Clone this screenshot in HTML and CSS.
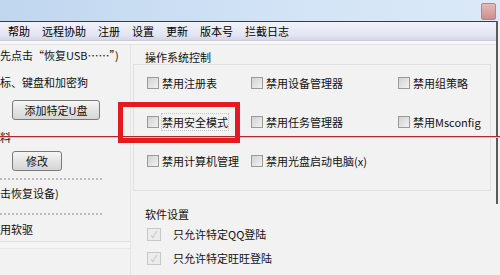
FILE: index.html
```html
<!DOCTYPE html>
<html lang="zh-CN">
<head>
    <meta charset="UTF-8">
    <title>操作系统控制</title>
    <link rel="stylesheet" href="styles.css">
</head>
<body>

    <!-- Title bar -->
    <div class="titlebar">
        <div class="close-btn"></div>
    </div>

    <div class="main">
        <div class="app">
            <!-- Menu -->
            <div class="menubar">
                <span>帮助</span>
                <span>远程协助</span>
                <span>注册</span>
                <span>设置</span>
                <span>更新</span>
                <span>版本号</span>
                <span>拦截日志</span>
            </div>
            <div class="menu-strip"></div>

            <div class="content">
                <!-- Left panel, cut off at the window edge -->
                <div class="left">
                    <div class="ltext">先点击“恢复USB……”)</div>
                    <div class="ltext t2">标、键盘和加密狗</div>
                    <div class="btn btn-add">添加特定U盘</div>
                    <div class="ltext t3">料</div>
                    <div class="btn btn-edit">修改</div>
                    <div class="dashed d1"></div>
                    <div class="ltext t4">击恢复设备)</div>
                    <div class="dashed d2"></div>
                    <div class="ltext t5">用软驱</div>
                    <div class="left-bottom"></div>
                </div>

                <!-- Right panel -->
                <div class="right">
                    <div class="group-label">操作系统控制</div>
                    <div class="group">
                        <label class="chk"><span class="box"></span>禁用注册表</label>
                        <label class="chk"><span class="box"></span>禁用设备管理器</label>
                        <label class="chk"><span class="box"></span>禁用组策略</label>
                        <label class="chk"><span class="box"></span><span class="focus">禁用安全模式</span></label>
                        <label class="chk"><span class="box"></span>禁用任务管理器</label>
                        <label class="chk"><span class="box"></span>禁用Msconfig</label>
                        <label class="chk"><span class="box"></span>禁用计算机管理</label>
                        <label class="chk"><span class="box"></span>禁用光盘启动电脑(x)</label>
                    </div>

                    <div class="soft-label">软件设置</div>
                    <label class="chk2 c1"><span class="box2">✓</span>只允许特定QQ登陆</label>
                    <label class="chk2 c2"><span class="box2">✓</span>只允许特定旺旺登陆</label>
                </div>
            </div>
        </div>
        <div class="edge"></div>
    </div>

    <!-- Annotations drawn over the screenshot -->
    <div class="mark-line"></div>
    <div class="mark-box"></div>

</body>
</html>
```

FILE: styles.css
```css
body {
    margin: 0;
    width: 500px;
    height: 275px;
    overflow: hidden;
    position: relative;
    background: #f2f2f2;
    font-family: "Noto Sans CJK SC", "DejaVu Sans", sans-serif;
    font-size: 11px;
    color: #111;
}
.titlebar {
    height: 21px;
    background: linear-gradient(to right, #c0d6ef, #d3e4f6 60%, #dbe9f8);
    display: flex;
    justify-content: flex-end;
    align-items: flex-start;
    padding-right: 4px;
}
.close-btn {
    width: 13px;
    height: 15px;
    margin-top: 3px;
    background: linear-gradient(#e7b8b8, #cf8d8d);
    border: 1px solid #b98484;
    border-radius: 2px;
}
.main {
    display: flex;
    align-items: flex-start;
}
.app {
    width: 496px;
    border-top: 1px solid #3c3c3c;
}
.edge {
    width: 2px;
    height: 183px;
    background: #5a5a5a;
}
.menubar {
    height: 18px;
    display: flex;
    align-items: center;
    gap: 12px;
    padding-left: 8px;
    background: linear-gradient(#f1f2fa, #e3e5f3 70%, #d4d7e6);
    border-bottom: 1px solid #c9cbd8;
    color: #000;
}
.menu-strip {
    height: 3px;
    background: #f8f8f8;
    border-bottom: 1px solid #e2e2e2;
}
.content {
    display: flex;
    height: 233px;
}

/* left panel */
.left {
    width: 130px;
    border-right: 1px solid #e4e4e4;
    padding-top: 2px;
    display: flex;
    flex-direction: column;
    align-items: flex-start;
}
.ltext {
    line-height: 16px;
    white-space: nowrap;
}
.t2 { margin-top: 11px; }
.t3 { margin-top: 9px; }
.t4 { margin-top: 5px; }
.t5 { margin-top: 6px; }
.btn {
    height: 18px;
    line-height: 18px;
    text-align: center;
    border: 1px solid #7a7a7a;
    border-radius: 3px;
    background: linear-gradient(#f6f6f6, #e4e4e4 50%, #d6d6d6);
    margin-left: 12px;
}
.btn-add { width: 86px; margin-top: 10px; }
.btn-edit { width: 48px; margin-top: 6px; }
.dashed {
    width: 102px;
    border-top: 2px dotted #bababa;
}
.d1 { margin-top: 7px; }
.d2 { margin-top: 12px; }
.left-bottom {
    margin-top: 4px;
    width: 130px;
    height: 6px;
    border-top: 1px solid #dedede;
    border-bottom: 1px solid #e6e6e6;
    background: #f5f5f5;
}

/* right panel */
.right {
    flex: 1;
    padding-top: 4px;
    padding-left: 14px;
}
.group-label {
    line-height: 16px;
}
.group {
    margin-left: -12px;
    margin-right: 5px;
    margin-top: -1px;
    border: 1px solid #e0e0e0;
    padding: 10px 0 21px 13px;
    display: grid;
    grid-template-columns: 104px 147px auto;
    grid-auto-rows: 16px;
    row-gap: 23px;
}
.chk {
    display: flex;
    align-items: center;
    gap: 3px;
    white-space: nowrap;
    line-height: 16px;
}
.box {
    width: 10px;
    height: 10px;
    border: 1px solid #9a9a9a;
    background: linear-gradient(135deg, #d2d2d2, #f2f2f2);
}
.focus {
    outline: 1px dotted #c4c4c4;
}
.soft-label {
    margin-top: 15px;
    line-height: 16px;
}
.chk2 {
    display: flex;
    align-items: center;
    gap: 12px;
    line-height: 16px;
    margin-left: 2px;
}
.c1 { margin-top: 4px; }
.c2 { margin-top: 8px; }
.box2 {
    width: 12px;
    height: 11px;
    border: 1px solid #c8c8c8;
    background: #ececec;
    color: #c0c0c0;
    font-size: 9px;
    line-height: 11px;
    text-align: center;
}

/* red annotations */
.mark-line {
    position: absolute;
    left: 0;
    top: 136px;
    width: 500px;
    height: 1px;
    background: #b3282c;
    box-shadow: 0 1px 0 #e9b9b9;
}
.mark-box {
    position: absolute;
    left: 118px;
    top: 102px;
    width: 112px;
    height: 31px;
    border: 5px solid #e31a20;
}
```
